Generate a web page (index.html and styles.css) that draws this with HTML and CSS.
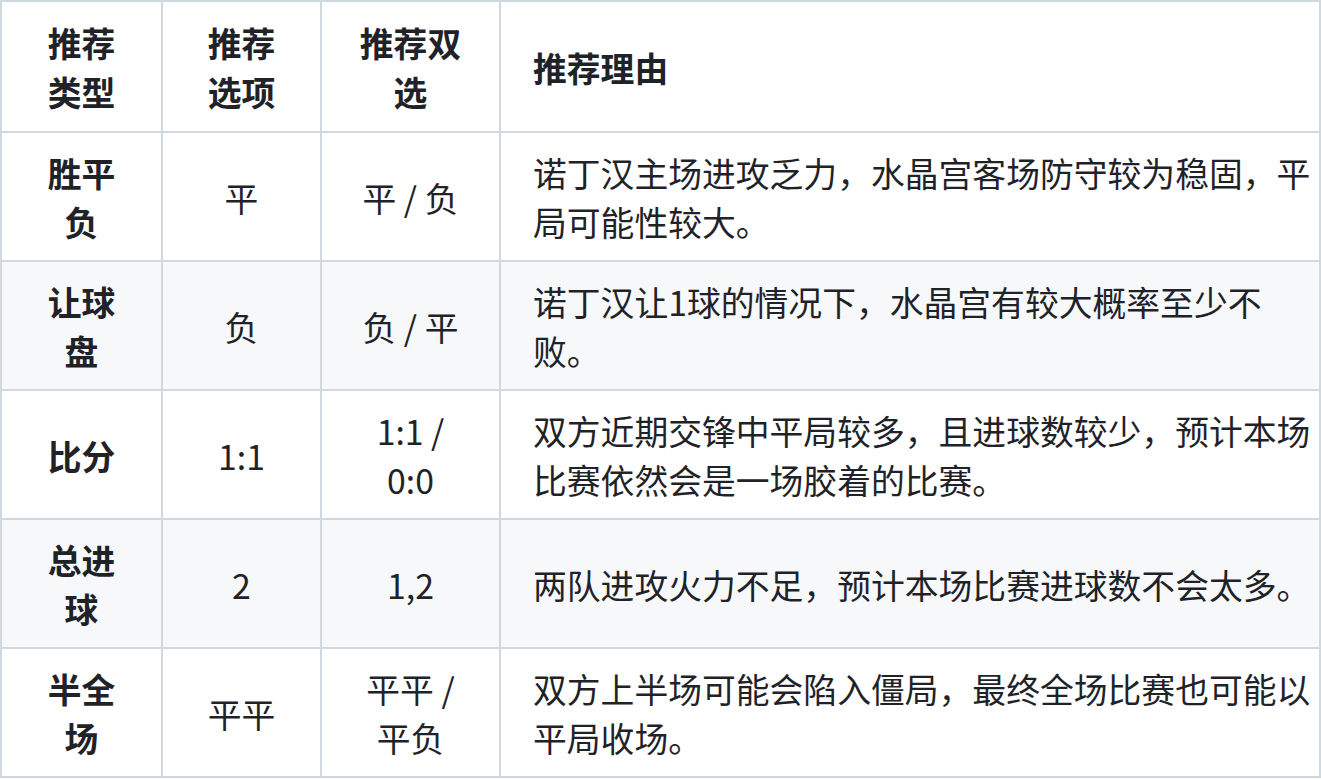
FILE: index.html
```html
<!DOCTYPE html>
<html lang="zh-CN">
<head>
<meta charset="utf-8">
<title>推荐</title>
<link rel="stylesheet" href="styles.css">
</head>
<body>
<table class="rec">
  <colgroup>
    <col class="c1"><col class="c2"><col class="c3"><col class="c4">
  </colgroup>
  <thead>
    <tr>
      <th class="ctr">推荐类型</th>
      <th class="ctr">推荐选项</th>
      <th class="ctr">推荐双选</th>
      <th class="reason">推荐理由</th>
    </tr>
  </thead>
  <tbody>
    <tr>
      <td class="ctr strong">胜平负</td>
      <td class="ctr">平</td>
      <td class="ctr">平 / 负</td>
      <td class="reason">诺丁汉主场进攻乏力，水晶宫客场防守较为稳固，平局可能性较大。</td>
    </tr>
    <tr>
      <td class="ctr strong">让球盘</td>
      <td class="ctr">负</td>
      <td class="ctr">负 / 平</td>
      <td class="reason">诺丁汉让1球的情况下，水晶宫有较大概率至少不败。</td>
    </tr>
    <tr>
      <td class="ctr strong">比分</td>
      <td class="ctr">1:1</td>
      <td class="ctr">1:1 / 0:0</td>
      <td class="reason">双方近期交锋中平局较多，且进球数较少，预计本场比赛依然会是一场胶着的比赛。</td>
    </tr>
    <tr>
      <td class="ctr strong">总进球</td>
      <td class="ctr">2</td>
      <td class="ctr">1,2</td>
      <td class="reason">两队进攻火力不足，预计本场比赛进球数不会太多。</td>
    </tr>
    <tr>
      <td class="ctr strong">半全场</td>
      <td class="ctr">平平</td>
      <td class="ctr">平平 / 平负</td>
      <td class="reason">双方上半场可能会陷入僵局，最终全场比赛也可能以平局收场。</td>
    </tr>
  </tbody>
</table>
</body>
</html>
```
FILE: styles.css
```css
html, body {
  margin: 0;
  padding: 0;
  background: #ffffff;
}
body {
  font-family: "Noto Sans CJK SC", "Noto Sans", sans-serif;
  font-size: 33.8px;
  line-height: 49px;
  color: #1f2328;
}
.rec {
  border-collapse: collapse;
  table-layout: fixed;
  width: 1319px;
  margin: 0;
  border-spacing: 0;
}
.c1 { width: 161px; }
.c2 { width: 159px; }
.c3 { width: 179px; }
.c4 { width: 820px; }
.rec th,
.rec td {
  border: 2px solid #d1d9e0;
  padding: 15px 32px 14px 32px;
  vertical-align: middle;
  text-align: left;
}
.rec th {
  font-weight: 700;
  padding-top: 16px;
  padding-bottom: 15px;
}
.rec .reason {
  padding-right: 0;
}
.rec .ctr {
  text-align: center;
}
.rec .strong {
  font-weight: 700;
}
.rec tbody tr:nth-child(even) {
  background: #f6f8fa;
}
```
